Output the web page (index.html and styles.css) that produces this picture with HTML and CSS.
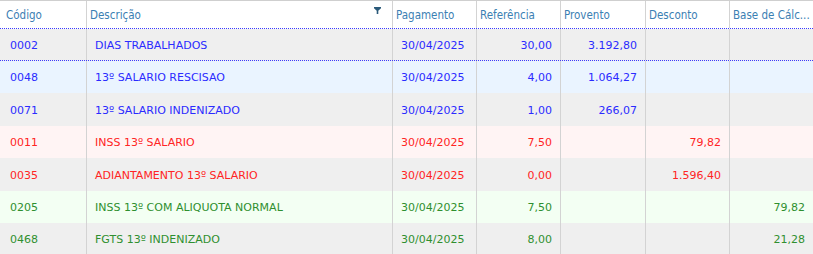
FILE: index.html
```html
<!DOCTYPE html>
<html lang="pt">
<head>
<meta charset="utf-8">
<link rel="stylesheet" href="styles.css">
</head>
<body>
<div class="grid">
  <div class="row head">
    <div class="c c1">Código</div>
    <div class="c c2">Descrição<svg class="filter" width="7" height="7" viewBox="0 0 7 7"><path d="M0 0H7V1.2L4.3 3.8V7H2.7V3.8L0 1.2Z" fill="#2b5a7a"/></svg></div>
    <div class="c">Pagamento</div>
    <div class="c">Referência</div>
    <div class="c c5">Provento</div>
    <div class="c">Desconto</div>
    <div class="c last">Base de Cálc...</div>
  </div>
  <div class="row data focus gray blue">
    <div class="c c1">0002</div><div class="c c2">DIAS TRABALHADOS</div><div class="c">30/04/2025</div><div class="c r">30,00</div><div class="c c5 r">3.192,80</div><div class="c r"></div><div class="c last r"></div>
  </div>
  <div class="row data lblue blue">
    <div class="c c1">0048</div><div class="c c2">13º SALARIO RESCISAO</div><div class="c">30/04/2025</div><div class="c r">4,00</div><div class="c c5 r">1.064,27</div><div class="c r"></div><div class="c last r"></div>
  </div>
  <div class="row data tall gray blue">
    <div class="c c1">0071</div><div class="c c2">13º SALARIO INDENIZADO</div><div class="c">30/04/2025</div><div class="c r">1,00</div><div class="c c5 r">266,07</div><div class="c r"></div><div class="c last r"></div>
  </div>
  <div class="row data pink red">
    <div class="c c1">0011</div><div class="c c2">INSS 13º SALARIO</div><div class="c">30/04/2025</div><div class="c r">7,50</div><div class="c c5 r"></div><div class="c r">79,82</div><div class="c last r"></div>
  </div>
  <div class="row data tall gray red">
    <div class="c c1">0035</div><div class="c c2">ADIANTAMENTO 13º SALARIO</div><div class="c">30/04/2025</div><div class="c r">0,00</div><div class="c c5 r"></div><div class="c r">1.596,40</div><div class="c last r"></div>
  </div>
  <div class="row data lgreen green">
    <div class="c c1">0205</div><div class="c c2">INSS 13º COM ALIQUOTA NORMAL</div><div class="c">30/04/2025</div><div class="c r">7,50</div><div class="c c5 r"></div><div class="c r"></div><div class="c last r">79,82</div>
  </div>
  <div class="row data gray green">
    <div class="c c1">0468</div><div class="c c2">FGTS 13º INDENIZADO</div><div class="c">30/04/2025</div><div class="c r">8,00</div><div class="c c5 r"></div><div class="c r"></div><div class="c last r">21,28</div>
  </div>
</div>
</body>
</html>
```
FILE: styles.css
```css
html, body {
  margin: 0;
  padding: 0;
  background: #ffffff;
}
.grid {
  width: 813px;
  font-family: "DejaVu Sans", Verdana, sans-serif;
  font-size: 11px;
  overflow: hidden;
}
.row {
  display: grid;
  grid-template-columns: 87px 306px 84px 84px 85px 84px 83px;
  height: 32px;
}
.row.tall { height: 33px; }
.c {
  border-right: 1px solid #d3d3d3;
  display: flex;
  align-items: center;
  padding: 1px 8px 0;
  white-space: nowrap;
  overflow: hidden;
  min-width: 0;
}
.c.last { border-right: none; }
.c.r { justify-content: flex-end; }
.c.c1 { padding-left: 10px; }
.head {
  border-top: 1px solid #cfcfcf;
  box-sizing: border-box;
  border-bottom: 1px dotted #3a3aff;
  height: 29px;
  color: #3b80b3;
  font-family: "DejaVu Sans Condensed", "DejaVu Sans", sans-serif;
  font-size: 11.5px;
}
.head .c { padding: 1px 3px 0; }
.head .c.c1 { padding-left: 6px; }
.head .c2 { position: relative; }
.filter {
  position: absolute;
  right: 11px;
  top: 6px;
}
.data.focus {
  height: 32px;
  box-sizing: border-box;
  border-bottom: 1px dotted #3a3aff;
}
.gray { background: #efefef; }
.lblue { background: #eaf4ff; }
.pink { background: #fff4f4; }
.lgreen { background: #f3fff3; }
.blue { color: #2b2bff; }
.red { color: #ff2424; }
.green { color: #2f8f2f; }
```
